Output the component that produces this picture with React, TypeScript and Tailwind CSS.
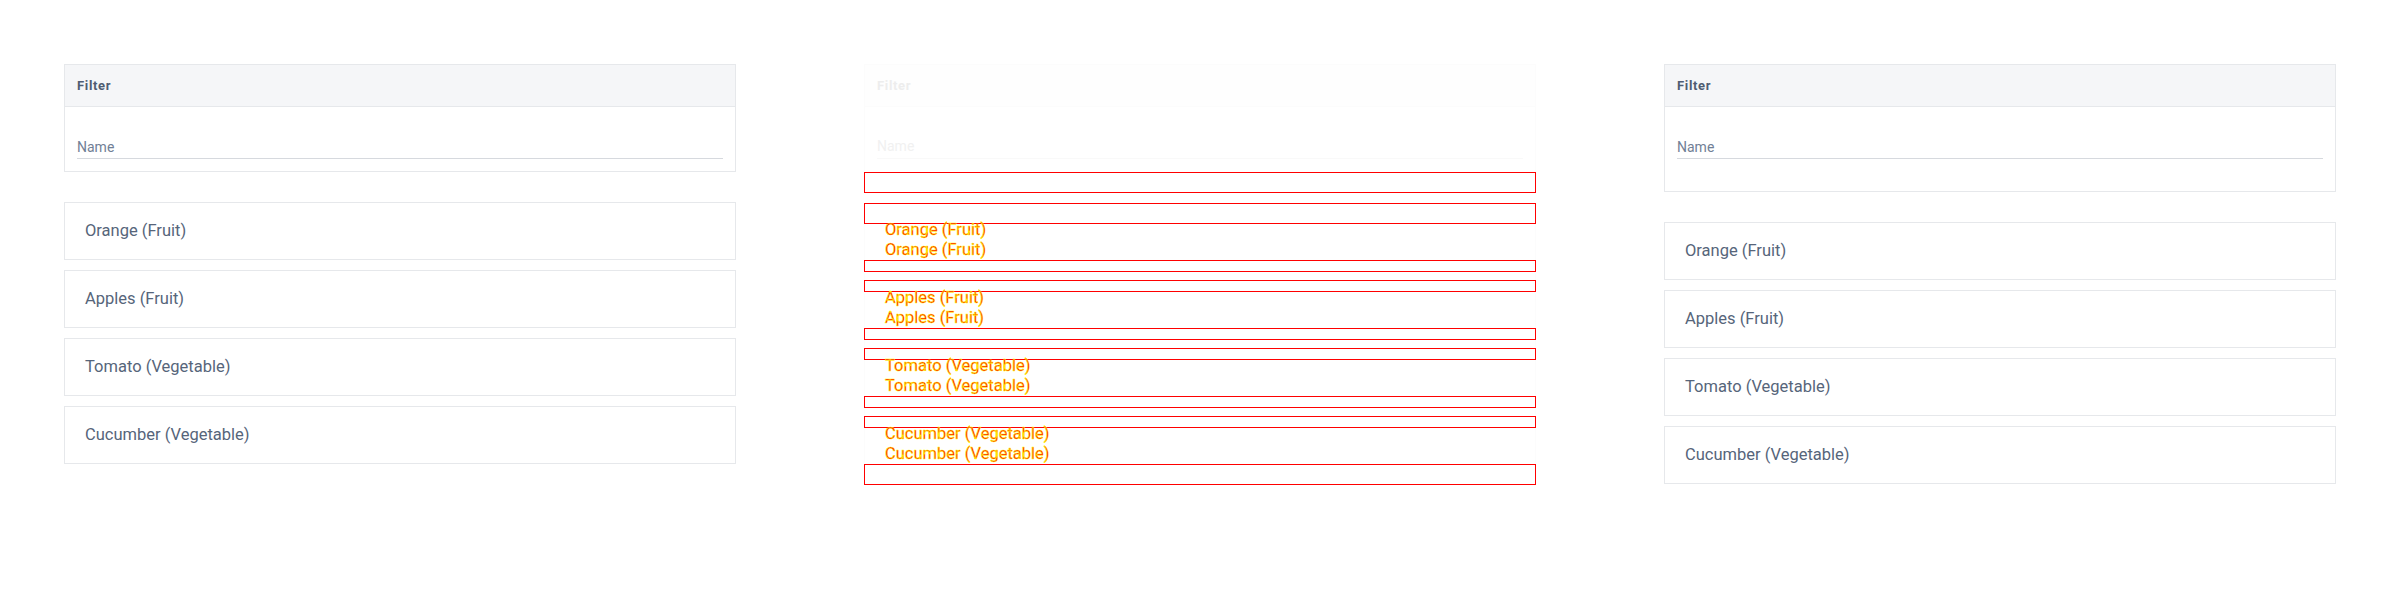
const items = ['Orange (Fruit)', 'Apples (Fruit)', 'Tomato (Vegetable)', 'Cucumber (Vegetable)'];

function FilterCard({ tall }: { tall?: boolean }) {
    return (
        <div className='border border-[#e6e8eb] bg-white'>
            <div className='h-[42px] px-3 flex items-center bg-[#f5f6f8] border-b border-[#e6e8eb]'>
                <span className='text-[13px] font-bold tracking-wider text-[#4f5d72]'>Filter</span>
            </div>
            <div className={tall ? 'px-3 pt-[28px] pb-8' : 'px-3 pt-[28px] pb-3'}>
                <input
                    type='text'
                    placeholder='Name'
                    className='block w-full h-6 text-[14px] text-[#4a5568] placeholder:text-[#718096] border-b border-[#d6d9de] outline-none bg-transparent'
                />
            </div>
        </div>
    );
}

function ItemList() {
    return (
        <div className='mt-[30px] flex flex-col gap-[10px]'>
            {items.map(item => (
                <div key={item} className='h-[58px] px-5 flex items-center border border-[#e6e8eb] text-[16.5px] text-[#56657a]'>
                    {item}
                </div>
            ))}
        </div>
    );
}

// red boxes where the two versions differ
function Diff({ h }: { h: string }) {
    return <div className={`border border-[#ff0000] ${h}`} />;
}

function DiffText({ text }: { text: string }) {
    return (
        <div className='h-9 px-5 border-x border-[#fcfcfc] flow-root'>
            <div className='-mt-1 text-[16.5px] leading-5 text-[#ff0000] [-webkit-text-stroke:0.5px_#ffff00]'>
                <div>{text}</div>
                <div>{text}</div>
            </div>
        </div>
    );
}

function DiffColumn() {
    return (
        <div className='flex flex-col'>
            <div className='h-[108px] border-t border-x border-[#fcfcfc]'>
                <div className='h-[42px] px-3 flex items-center bg-[#fefefe] border-b border-[#fcfcfc]'>
                    <span className='text-[13px] font-bold tracking-wider text-[#ededed]'>Filter</span>
                </div>
                <div className='px-3 pt-[28px]'>
                    <div className='h-6 flex items-center text-[14px] text-[#f1f1f1] border-b border-[#f9f9f9]'>Name</div>
                </div>
            </div>
            <Diff h='h-[21px]' />
            <div className='h-[10px]' />
            <Diff h='h-[21px]' />
            {items.map((item, i) => (
                <div key={item}>
                    <DiffText text={item} />
                    {i < items.length - 1 ? (
                        <>
                            <Diff h='h-[12px]' />
                            <div className='h-2 border-x border-[#fcfcfc]' />
                            <Diff h='h-[12px]' />
                        </>
                    ) : (
                        <Diff h='h-[21px]' />
                    )}
                </div>
            ))}
        </div>
    );
}

export default function App() {
    return (
        <div className='w-[2400px] h-[600px] bg-white px-16 pt-16 grid grid-cols-3 gap-32 items-start [font-family:Roboto,sans-serif]'>
            <div>
                <FilterCard />
                <ItemList />
            </div>
            <DiffColumn />
            <div>
                <FilterCard tall />
                <ItemList />
            </div>
        </div>
    );
}
